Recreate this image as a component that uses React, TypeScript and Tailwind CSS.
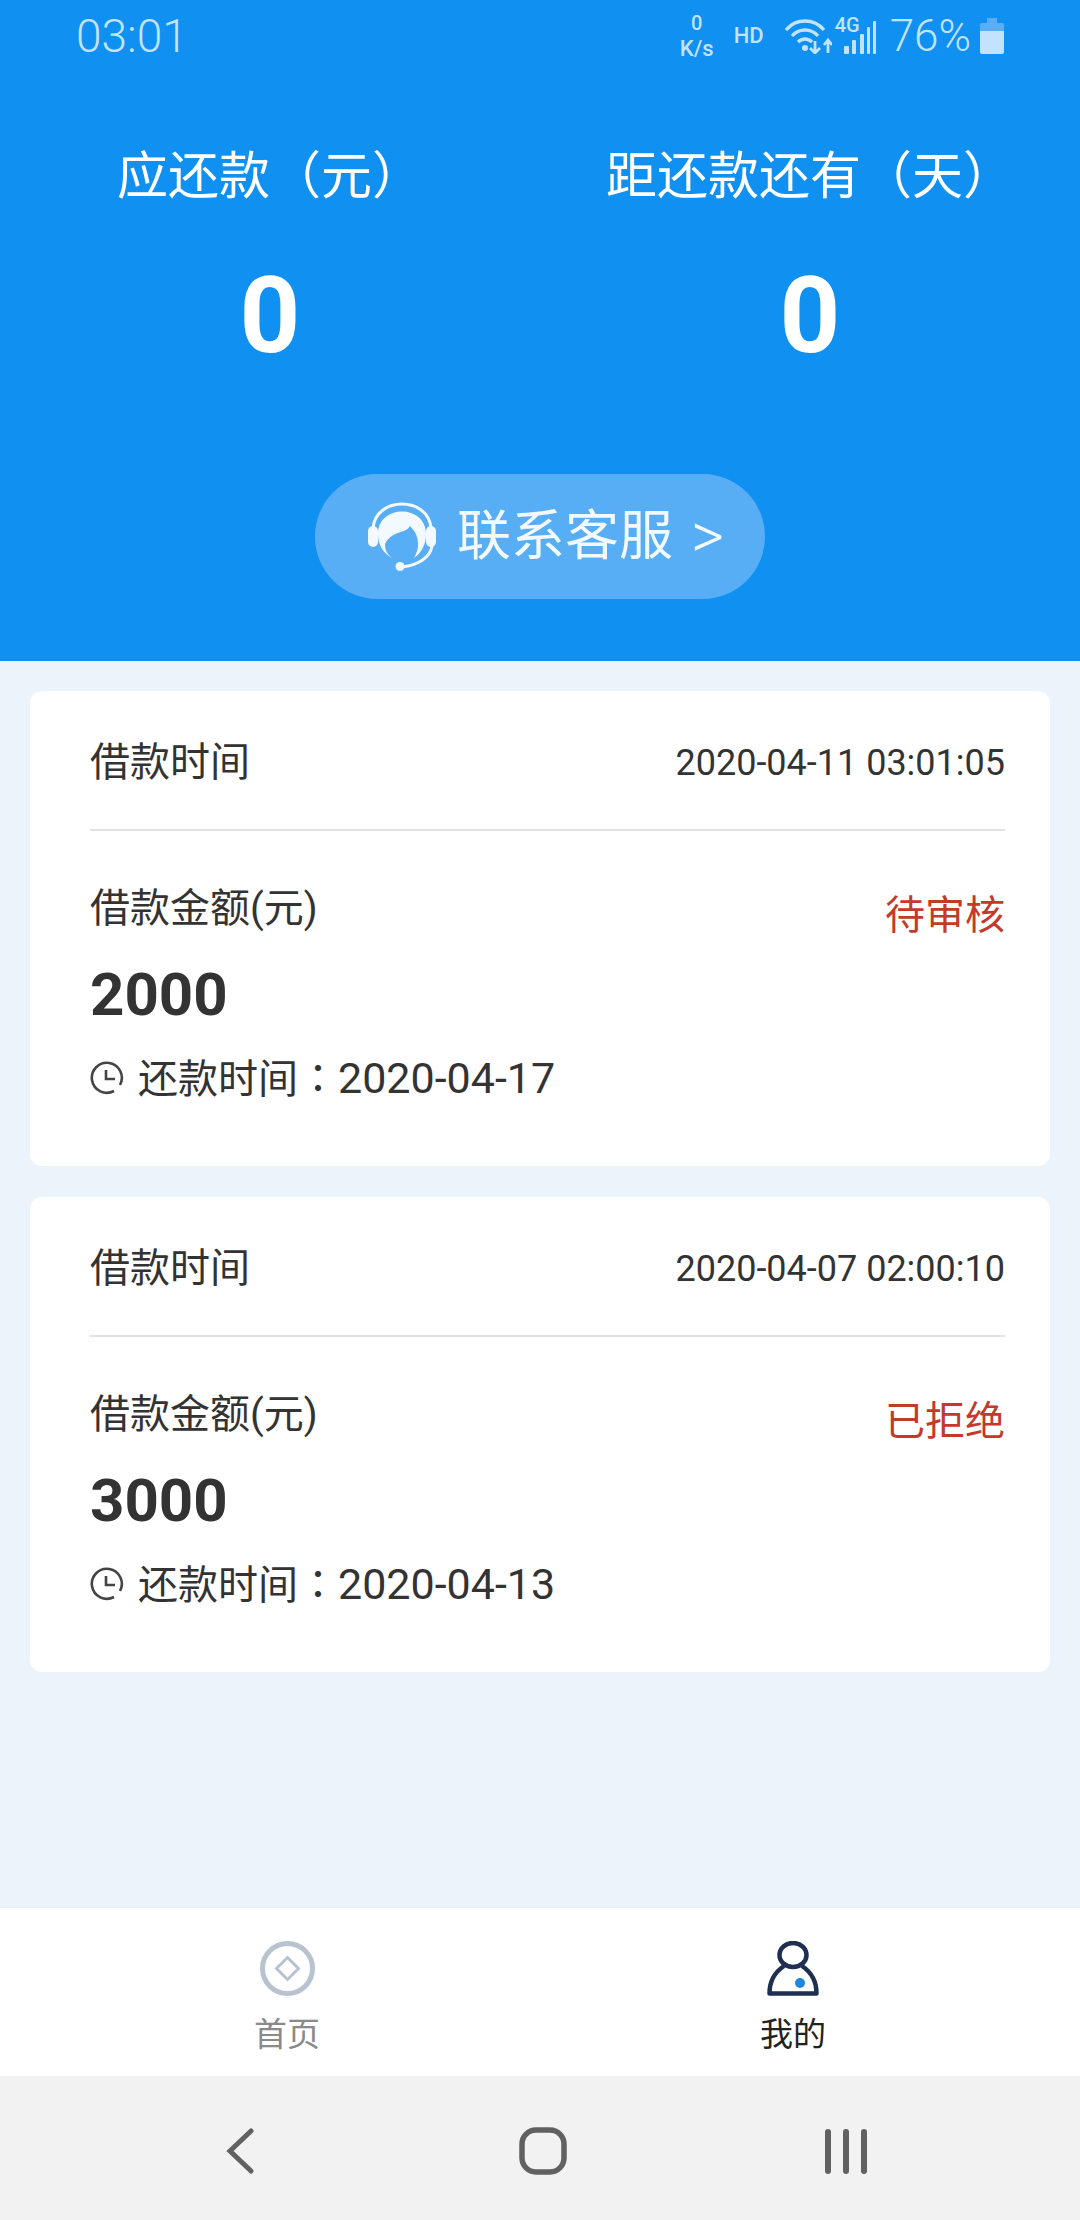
const FONT = "font-['Roboto','Noto_Sans_CJK_SC',sans-serif]"

const LOANS = [
  { time: '2020-04-11 03:01:05', status: '待审核', amount: '2000', due: '2020-04-17' },
  { time: '2020-04-07 02:00:10', status: '已拒绝', amount: '3000', due: '2020-04-13' },
]

function StatusBar() {
  return (
    <div className="flex h-[72px] items-center justify-between pl-[76px] pr-[76px] text-[#c2e2fd]">
      <span className="text-[46px] leading-none font-light">03:01</span>
      <div className="flex items-center">
        <div className="flex w-[40px] flex-col items-center leading-[25px] font-medium">
          <span className="text-[20px]">0</span>
          <span className="text-[22px]">K/s</span>
        </div>
        <span className="ml-[17px] text-[22px] leading-none font-medium">HD</span>
        <svg width="47" height="36" viewBox="0 0 47 36" className="ml-[21px]" fill="none" stroke="currentColor">
          <path d="M1 12 C 11 0, 29 0, 39 12" strokeWidth="3.4" />
          <path d="M7 18 C 14 10, 26 10, 33 18" strokeWidth="3.4" />
          <path d="M13 24 C 17 20, 23 20, 27 24" strokeWidth="3.4" />
          <circle cx="20" cy="30" r="3" fill="currentColor" stroke="none" />
          <path d="M30 23 V35 M25 30 L30 35 L35 30" strokeWidth="2.8" />
          <path d="M43 35 V23 M39 27 L43 22 L47 27" strokeWidth="2.8" />
        </svg>
        <div className="relative ml-[3px] h-[36px] w-[41px]">
          <span className="absolute top-[-5px] left-0 text-[20px] leading-[24px] font-medium">4G</span>
          <svg width="41" height="36" viewBox="0 0 41 36" fill="currentColor">
            <rect x="9" y="28" width="5" height="8" rx="1" />
            <rect x="17" y="22" width="4" height="14" rx="1" />
            <rect x="25" y="16" width="4" height="20" rx="1" />
            <rect x="32" y="9" width="3" height="27" rx="1" />
            <rect x="38" y="3" width="3" height="33" rx="1" />
          </svg>
        </div>
        <span className="ml-[14px] text-[44px] leading-none font-light">76%</span>
        <svg width="24" height="36" viewBox="0 0 24 36" className="ml-[9px]">
          <path d="M7 0 H17 V5 H22 Q24 5 24 7 V13 H0 V7 Q0 5 2 5 H7 Z" fill="#5aaef6" />
          <path d="M0 13 H24 V34 Q24 36 22 36 H2 Q0 36 0 34 Z" fill="#c2e2fd" />
        </svg>
      </div>
    </div>
  )
}

function HeadsetIcon() {
  return (
    <svg width="68" height="69" viewBox="0 0 68 69" className="text-[#f2f9ff]">
      <path d="M5 26 C 8 -6, 60 -6, 63 26" fill="none" stroke="currentColor" strokeWidth="3" />
      <rect x="0" y="24" width="10" height="21" rx="5" fill="currentColor" />
      <rect x="58" y="24" width="10" height="21" rx="5" fill="currentColor" />
      <path d="M10 32 C 10 2, 58 2, 58 32 C 58 42, 54 50, 46 56 C 52 46, 52 34, 42 24 C 38 32, 24 28, 17 42 C 17 48, 19 52, 24 56 C 14 50, 10 42, 10 32 Z" fill="currentColor" />
      <path d="M64 44 C 62 56, 50 63, 34 65" fill="none" stroke="currentColor" strokeWidth="3" />
      <circle cx="32" cy="64.5" r="4.5" fill="currentColor" />
    </svg>
  )
}

function ClockIcon() {
  return (
    <svg width="34" height="34" viewBox="0 0 34 34" fill="none" stroke="#444" strokeWidth="2.6">
      <path d="M30 24 A 15 15 0 1 0 24 30" />
      <path d="M16 9 V18 H25" />
    </svg>
  )
}

function LoanCard({ time, status, amount, due }: (typeof LOANS)[number]) {
  return (
    <div className="rounded-[12px] bg-white pl-[60px] pr-[45px]">
      <div className="flex h-[140px] items-center justify-between border-b-2 border-[#e2e2e2] pt-[5px]">
        <span className="text-[40px] leading-none text-[#333]">借款时间</span>
        <span className="text-[36px] leading-none text-[#333]">{time}</span>
      </div>
      <div className="flex items-start justify-between pt-[55px]">
        <span className="text-[40px] leading-[46px] text-[#333]">借款金额(元)</span>
        <span className="mt-[7px] text-[40px] leading-[46px] text-[#c33a2c]">{status}</span>
      </div>
      <div className="mt-[21px] text-[60px] leading-[70px] font-bold text-[#333]">{amount}</div>
      <div className="mt-[18px] box-content flex h-[60px] items-center pb-[58px] text-[40px] leading-none text-[#333]">
        <ClockIcon />
        <span className="ml-[14px]">
          还款时间<span className="font-['Noto_Sans_CJK_TC']">：</span>
          <span className="text-[43px]">{due}</span>
        </span>
      </div>
    </div>
  )
}

export default function App() {
  return (
    <div className={`${FONT} flex h-[2220px] w-[1080px] flex-col overflow-hidden bg-[#ebf3fb]`}>
      <div className="h-[661px] shrink-0 bg-[#1090f1] text-white">
        <StatusBar />
        <div className="grid grid-cols-2 pt-[77px]">
          <div className="flex flex-col items-center">
            <span className="text-[51px] leading-[56px]">应还款（元）</span>
            <span className="mt-[55px] text-[106px] leading-[112px] font-bold">0</span>
          </div>
          <div className="flex flex-col items-center">
            <span className="text-[51px] leading-[56px]">距还款还有（天）</span>
            <span className="mt-[55px] text-[106px] leading-[112px] font-bold">0</span>
          </div>
        </div>
        <div className="mt-[102px] flex justify-center">
          <div className="flex h-[125px] w-[450px] items-center rounded-full bg-[#58aef5] pl-[53px] text-[#f2f9ff]">
            <HeadsetIcon />
            <span className="ml-[21px] text-[54px] leading-none">联系客服</span>
            <span className="ml-[18px] text-[64px] leading-none font-light">&gt;</span>
          </div>
        </div>
      </div>

      <div className="flex flex-1 flex-col gap-[31px] px-[30px] pt-[30px]">
        {LOANS.map((loan) => (
          <LoanCard key={loan.time} {...loan} />
        ))}
      </div>

      <div className="grid h-[169px] shrink-0 grid-cols-2 border-t border-[#f0f0f0] bg-white px-[34px]">
        <div className="flex flex-col items-center pt-[33px]">
          <svg width="55" height="55" viewBox="0 0 55 55" fill="none" stroke="#b9c2cf">
            <circle cx="27.5" cy="27.5" r="25" strokeWidth="5" />
            <path d="M27.5 16.5 L38.5 27.5 L27.5 38.5 L16.5 27.5 Z" strokeWidth="3" />
          </svg>
          <span className="mt-[17px] text-[33px] leading-[44px] text-[#8a8a8a]">首页</span>
        </div>
        <div className="flex flex-col items-center pt-[33px]">
          <svg width="52" height="55" viewBox="0 0 52 55" fill="none" stroke="#1e2f52" strokeWidth="4.5">
            <ellipse cx="26" cy="14" rx="13.5" ry="12" />
            <path d="M17 25 C 8 31, 2.5 41, 2.5 52.5 H49.5 C 49.5 41, 44 31, 35 25" strokeLinejoin="round" />
            <circle cx="33" cy="42" r="5" fill="#1e86e0" stroke="none" />
          </svg>
          <span className="mt-[17px] text-[33px] leading-[44px] text-[#222]">我的</span>
        </div>
      </div>

      <div className="flex h-[144px] shrink-0 items-center bg-[#f2f2f2] pt-[6px] pl-[226px]">
        <svg width="28" height="46" viewBox="0 0 28 46" fill="none" stroke="#616161" strokeWidth="5" strokeLinecap="round">
          <path d="M25 3 L4 23 L25 43" />
        </svg>
        <svg width="48" height="48" viewBox="0 0 48 48" fill="none" stroke="#616161" strokeWidth="5.5" className="ml-[265px]">
          <rect x="3" y="3" width="42" height="42" rx="14" />
        </svg>
        <div className="ml-[258px] flex gap-[12px]">
          <div className="h-[45px] w-[6px] rounded-full bg-[#616161]" />
          <div className="h-[45px] w-[6px] rounded-full bg-[#616161]" />
          <div className="h-[45px] w-[6px] rounded-full bg-[#616161]" />
        </div>
      </div>
    </div>
  )
}
